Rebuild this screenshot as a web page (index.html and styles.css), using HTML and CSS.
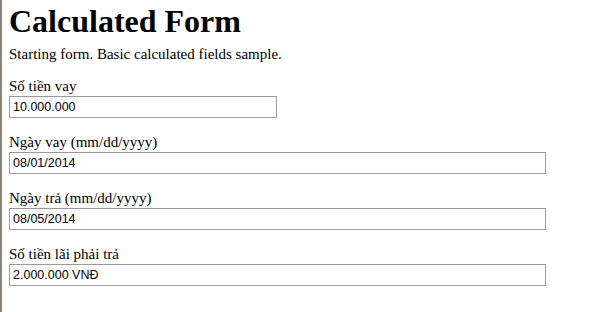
FILE: index.html
```html
<!DOCTYPE html>
<html lang="vi">
<head>
  <meta charset="UTF-8">
  <meta name="viewport" content="width=device-width, initial-scale=1.0">
  <title>Calculated Form</title>
  <link rel="stylesheet" href="styles.css">
</head>
<body>
  <div class="page">
    <h1>Calculated Form</h1>
    <p class="intro">Starting form. Basic calculated fields sample.</p>
    <form id="calc-form">
      <div class="field">
        <label for="amount">Số tiền vay</label>
        <input type="text" id="amount" class="short" value="10.000.000">
      </div>
      <div class="field">
        <label for="loanDate">Ngày vay (mm/dd/yyyy)</label>
        <input type="text" id="loanDate" value="08/01/2014">
      </div>
      <div class="field">
        <label for="payDate">Ngày trả (mm/dd/yyyy)</label>
        <input type="text" id="payDate" value="08/05/2014">
      </div>
      <div class="field">
        <label for="interest">Số tiền lãi phải trả</label>
        <input type="text" id="interest" value="2.000.000 VNĐ">
      </div>
    </form>
  </div>
</body>
</html>
```

FILE: styles.css
```css
html, body {
  height: 100%;
}

body {
  margin: 0;
  font-family: "Liberation Serif", "Times New Roman", serif;
  background-color: #fff;
  color: #000;
}

.page {
  min-height: 100%;
  box-sizing: border-box;
  border-left: 2px solid #8b8474;
  padding: 3px 8px 0 7px;
}

h1 {
  margin: 0;
  font-size: 32px;
  line-height: 37px;
}

.intro {
  margin: 4px 0 12px;
  font-size: 15px;
  line-height: 20px;
}

form {
  display: flex;
  flex-direction: column;
  gap: 14px;
}

.field {
  display: flex;
  flex-direction: column;
}

label {
  font-size: 15px;
  line-height: 20px;
}

input {
  width: 537px;
  height: 22px;
  box-sizing: border-box;
  margin: 0;
  padding: 1px 2px 1px 3px;
  border: 1px solid #a0a0a0;
  border-top-color: #999;
  font-family: "Liberation Sans", Arial, sans-serif;
  font-size: 12.5px;
  color: #000;
}

input.short {
  width: 268px;
}

input:focus {
  outline: none;
}
```
